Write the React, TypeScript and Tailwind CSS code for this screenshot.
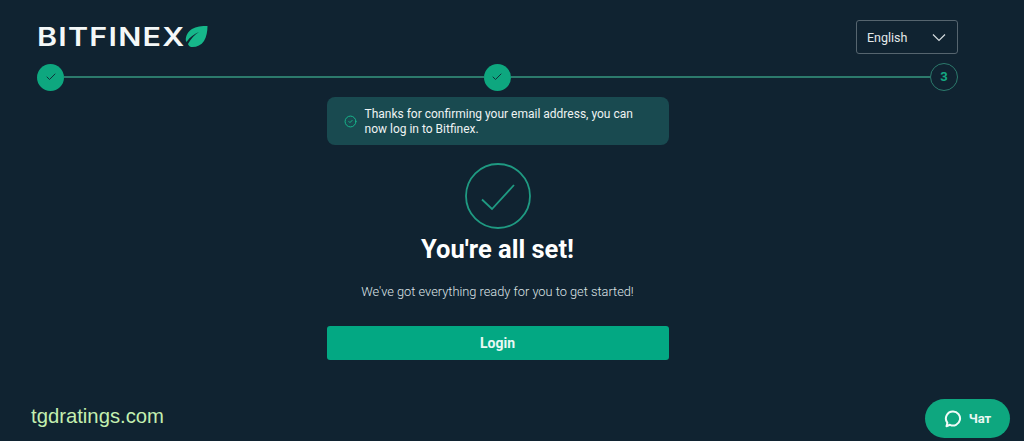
import { Check, CircleCheck } from "lucide-react";

function StepDone() {
  return (
    <div className="flex h-[27px] w-[27px] shrink-0 items-center justify-center rounded-full bg-[#0ea77f]">
      <Check size={12} strokeWidth={2} className="text-[#12303a]" />
    </div>
  );
}

function Line() {
  return <div className="h-[2px] flex-1 bg-[#2c7a6c]" />;
}

export default function App() {
  return (
    <main className="relative h-[441px] w-[1024px] overflow-hidden bg-[#102331] font-['Roboto',sans-serif] text-white">
      <div className="flex flex-col px-[37px] pt-[20px] pr-[66px]">
        <header className="flex h-[34px] items-center justify-between">
          <div className="flex items-center">
            <span className="inline-block w-[148px] origin-left font-['Inter',sans-serif] text-[25px] font-semibold leading-none tracking-[1px] text-[#f4f8f8] [transform:scaleX(1.22)]">
              BITFINEX
            </span>
            <svg width="23" height="23" viewBox="0 0 23 23" className="-mt-[2px]">
              <path
                d="M22.500 1C17 1 11 1.500 7 4 3 6.500 .500 11 .800 15.500L1.500 17C5 12 9 9 14 7 9.500 10 6 13.500 3 19 3.500 20.500 4.500 21.500 6 22 11 22.500 16 20.500 19 16 21.500 12 22.500 6 22.500 1Z"
                fill="#16b78a"
              />
            </svg>
          </div>
          <button className="flex h-[34px] w-[102px] items-center justify-between rounded-[3px] border border-[#56656f] pl-[10px] pr-[11px] pt-[2px] text-[12.500px] text-[#e3e8ea]">
            English
            <svg width="14" height="9" viewBox="0 0 14 9" className="-mt-[2px]">
              <path d="M1 1.500 7 7.500 13 1.500" fill="none" stroke="#d5dcdf" strokeWidth="1.200" />
            </svg>
          </button>
        </header>

        <div className="mt-[9px] flex items-center">
          <StepDone />
          <Line />
          <StepDone />
          <Line />
          <div className="flex h-[28px] w-[28px] shrink-0 items-center justify-center rounded-full border border-[#2c7a6c] text-[13px] font-bold text-[#14a883]">
            3
          </div>
        </div>

        <section className="mx-auto mt-[6px] flex w-[342px] flex-col items-center">
          <div className="flex h-[48px] w-full items-center rounded-[8px] bg-[#194a50] pl-[17px] pr-[20px] pt-[1px]">
            <CircleCheck size={13} strokeWidth={1.800} className="mr-[8px] shrink-0 text-[#17b78c]" />
            <p className="text-[12px] leading-[15px] text-[#eef3f3]">
              Thanks for confirming your email address, you can now log in to Bitfinex.
            </p>
          </div>

          <svg width="66" height="66" viewBox="0 0 66 66" className="mt-[18px]">
            <circle cx="33" cy="33" r="32" fill="none" stroke="#1f9a82" strokeWidth="1.800" />
            <path d="M17 36.500 L27 46 L49 22" fill="none" stroke="#1f9a82" strokeWidth="1.800" />
          </svg>

          <h1 className="mt-[5px] text-[25.500px] font-bold leading-[30px] text-white">You're all set!</h1>
          <p className="mt-[18px] text-[12.800px] font-light leading-[20px] text-[#dfe5e8]">
            We've got everything ready for you to get started!
          </p>
          <button className="mt-[24px] h-[34px] w-full rounded-[3px] bg-[#03a883] text-[14px] font-bold text-[#e9f8f4]">
            Login
          </button>
        </section>
      </div>

      <span className="absolute left-[31px] top-[404px] font-['Liberation_Sans',sans-serif] text-[20.300px] leading-[24px] text-[#c4efb0]">
        tgdratings.com
      </span>

      <button className="absolute left-[925px] top-[399px] flex h-[39px] w-[85px] items-center justify-center gap-[7px] rounded-full bg-[#0ea77f] text-[13px] font-bold text-[#eaf7f3]">
        <svg width="18" height="18" viewBox="0 0 18 18">
          <path
            d="M9 1.500a7 7 0 1 1-3 13.300L2.500 16.200l.900-3.400A7 7 0 0 1 9 1.500Z"
            fill="none"
            stroke="#f2fbf8"
            strokeWidth="2"
            strokeLinejoin="round"
          />
        </svg>
        Чат
      </button>
    </main>
  );
}
